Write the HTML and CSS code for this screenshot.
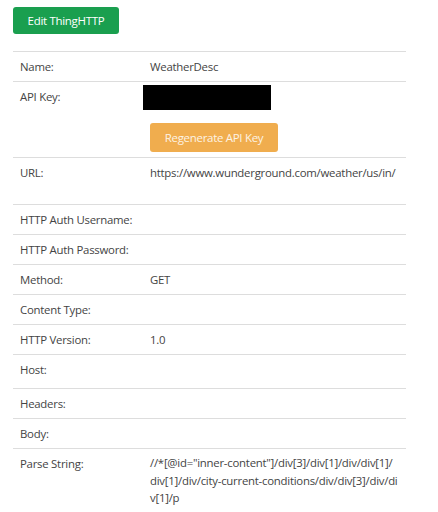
FILE: index.html
```html
<!DOCTYPE html>
<html>
<head>
<meta charset="utf-8">
<link rel="stylesheet" href="styles.css">
</head>
<body>
<div class="page">
  <div class="toolbar"><button class="btn btn-green">Edit ThingHTTP</button></div>
  <div class="details">
    <div class="row"><div class="label">Name:</div><div class="value">WeatherDesc</div></div>
    <div class="row">
      <div class="label">API Key:</div>
      <div class="value key-cell">
        <div class="redacted"></div>
        <button class="btn btn-orange">Regenerate API Key</button>
      </div>
    </div>
    <div class="row row-tall"><div class="label">URL:</div><div class="value">https://www.wunderground.com/weather/us/in/</div></div>
    <div class="row"><div class="label">HTTP Auth Username:</div><div class="value"></div></div>
    <div class="row"><div class="label">HTTP Auth Password:</div><div class="value"></div></div>
    <div class="row"><div class="label">Method:</div><div class="value">GET</div></div>
    <div class="row"><div class="label">Content Type:</div><div class="value"></div></div>
    <div class="row"><div class="label">HTTP Version:</div><div class="value">1.0</div></div>
    <div class="row row-host"><div class="label">Host:</div><div class="value"></div></div>
    <div class="row"><div class="label">Headers:</div><div class="value"></div></div>
    <div class="row"><div class="label">Body:</div><div class="value"></div></div>
    <div class="row"><div class="label">Parse String:</div><div class="value wrap">//*[@id="inner-content"]/div[3]/div[1]/div/div[1]/div[1]/div/city-current-conditions/div/div[3]/div/div[1]/p</div></div>
  </div>
</div>
</body>
</html>
```
FILE: styles.css
```css
html, body {
  margin: 0;
  padding: 0;
  background: #fff;
}
body {
  font-family: "Open Sans", "Noto Sans", sans-serif;
  font-size: 11.4px;
  letter-spacing: -0.25px;
  color: #444;
}
.page {
  width: 393px;
  padding: 7px 0 0 13px;
}
.toolbar {
  height: 44px;
}
.btn {
  border: none;
  border-radius: 3px;
  color: #fff;
  font-family: "Open Sans", sans-serif;
  letter-spacing: -0.3px;
  cursor: pointer;
}
.btn-green {
  background: #1a9f4f;
  width: 106px;
  height: 27px;
  font-size: 11.5px;
  padding: 0;
}
.btn-orange {
  background: #f0ad4e;
  width: 128px;
  height: 29px;
  font-size: 11.5px;
  color: #fdf3e4;
  padding: 0;
  margin-top: 13px;
}
.details {
  display: flex;
  flex-direction: column;
}
.row {
  display: grid;
  grid-template-columns: 130px 1fr;
  border-top: 1px solid #ddd;
}
.label, .value {
  padding: 6px 7px;
  line-height: 17px;
  min-height: 17px;
}
.label {
  white-space: nowrap;
}
.row-tall .value {
  padding-bottom: 23px;
}
.row-host .value {
  padding-bottom: 10px;
}
.key-cell {
  display: flex;
  flex-direction: column;
  align-items: flex-start;
  padding-top: 3px;
  padding-bottom: 5px;
}
.redacted {
  width: 128px;
  height: 25px;
  background: #000;
  margin-left: -7px;
}
.wrap {
  word-break: break-all;
  line-height: 17.5px;
  padding-top: 5px;
}
```
